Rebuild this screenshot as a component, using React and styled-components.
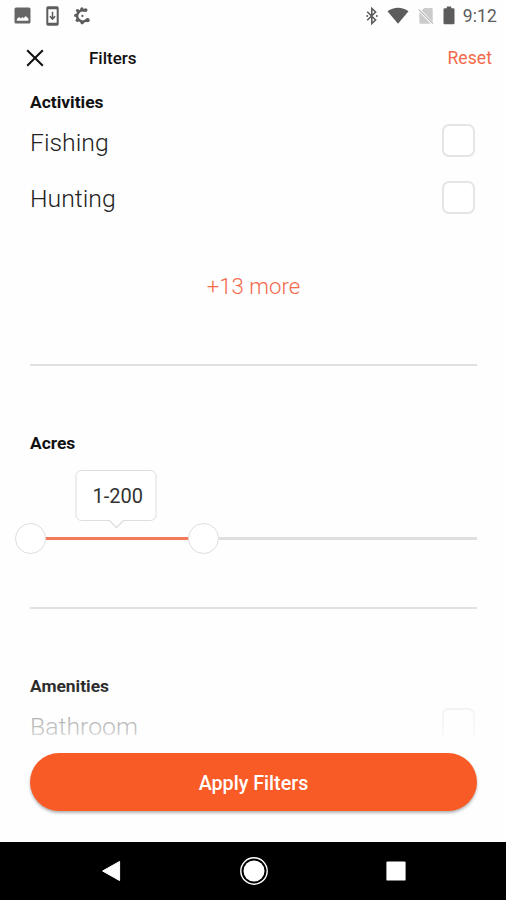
import React, { useState } from 'react';
import styled, { createGlobalStyle } from 'styled-components';

const MAX_ACRES = 518;

const App = () => {

    const [checked, setChecked] = useState({});
    const [range, setRange] = useState({ min: 1, max: 200 });

    const toggle = (name) => {
        setChecked({ ...checked, [name]: !checked[name] });
    };

    const handleReset = () => {
        setChecked({});
        setRange({ min: 1, max: 200 });
    };

    const start = ((range.min - 1) / MAX_ACRES) * 100;
    const end = (range.max / MAX_ACRES) * 100;

    return (
        <>
            <GlobalStyle />
            <Screen>
                <StatusBar>
                    <StatusLeft>
                        <ImageIcon />
                        <DownloadIcon />
                        <SyncIcon />
                    </StatusLeft>
                    <StatusRight>
                        <BluetoothIcon />
                        <WifiIcon />
                        <NoSimIcon />
                        <BatteryIcon />
                        <Clock>9:12</Clock>
                    </StatusRight>
                </StatusBar>

                <Header>
                    <CloseButton aria-label="Close">
                        <svg width="18" height="18" viewBox="0 0 18 18">
                            <path d="M1.2 1.2 16.8 16.8M16.8 1.2 1.2 16.8" stroke="#111" strokeWidth="2" />
                        </svg>
                    </CloseButton>
                    <Title>Filters</Title>
                    <ResetButton onClick={handleReset}>Reset</ResetButton>
                </Header>

                <Content>
                    <Section $height={282} $top={8}>
                        <SectionTitle>Activities</SectionTitle>
                        {['Fishing', 'Hunting'].map((name) => (
                            <OptionRow key={name}>
                                <OptionName>{name}</OptionName>
                                <Checkbox type="checkbox" aria-label={name} checked={!!checked[name]} onChange={() => toggle(name)} />
                            </OptionRow>
                        ))}
                        <MoreButton>+13 more</MoreButton>
                    </Section>

                    <Section $height={243} $top={67}>
                        <SectionTitle>Acres</SectionTitle>
                        <Slider>
                            <Track />
                            <TrackFill style={{ left: `${start}%`, width: `${end - start}%` }} />
                            <Thumb style={{ left: `${start}%` }} />
                            <Thumb style={{ left: `${end}%` }} />
                            <Tooltip style={{ left: `${(start + end) / 2}%` }}>
                                {range.min}-{range.max}
                                <TooltipArrow width="16" height="9" viewBox="0 0 16 9">
                                    <path d="M0 0h16L8 7.5z" fill="#fff" />
                                    <path d="M0 .5h1L8 7.5l7-7h1" fill="none" stroke="#dedede" strokeWidth="1.3" />
                                </TooltipArrow>
                            </Tooltip>
                        </Slider>
                    </Section>

                    <Section $height={160} $top={67}>
                        <SectionTitle>Amenities</SectionTitle>
                        <OptionRow>
                            <OptionName>Bathroom</OptionName>
                            <Checkbox type="checkbox" aria-label="Bathroom" checked={!!checked.Bathroom} onChange={() => toggle('Bathroom')} />
                        </OptionRow>
                    </Section>
                    <Fade />
                </Content>

                <Footer>
                    <ApplyButton>Apply Filters</ApplyButton>
                </Footer>

                <NavBar>
                    <svg width="20" height="22" viewBox="0 0 20 22">
                        <path d="M18.6 1.4v19.2L1.6 11z" fill="#fff" stroke="#fff" strokeWidth="1" strokeLinejoin="round" />
                    </svg>
                    <svg width="30" height="30" viewBox="0 0 30 30">
                        <circle cx="15" cy="15" r="13.2" fill="none" stroke="#fff" strokeWidth="1.4" />
                        <circle cx="15" cy="15" r="10.5" fill="#fff" />
                    </svg>
                    <svg width="20" height="20" viewBox="0 0 20 20">
                        <rect x=".4" y=".4" width="19.2" height="19.2" rx="1.2" fill="#fff" />
                    </svg>
                </NavBar>
            </Screen>
        </>
    );
};

export default App;

const ImageIcon = () => (
    <svg width="17" height="17" viewBox="0 0 17 17">
        <path fillRule="evenodd" fill="#666" d="M2 .5h13A1.5 1.5 0 0 1 16.5 2v13a1.5 1.5 0 0 1-1.5 1.5H2A1.5 1.5 0 0 1 .5 15V2A1.5 1.5 0 0 1 2 .5zM2.8 13.8h11.6V11.5l-2.8-2.5-1.8 2.2-1.2-1.1-1.6 1.5L5 10.1l-2.2 2.2z" />
    </svg>
);

const DownloadIcon = () => (
    <svg width="13" height="20" viewBox="0 0 13 20">
        <path fillRule="evenodd" fill="#5c5c5c" d="M2 .3h9A1.7 1.7 0 0 1 12.7 2v16a1.7 1.7 0 0 1-1.7 1.7H2A1.7 1.7 0 0 1 .3 18V2A1.7 1.7 0 0 1 2 .3zM2.3 3.3v13.4h8.4V3.3z" />
        <path d="M6.5 5.7v7M3.9 10.2l2.6 2.9 2.6-2.9" fill="none" stroke="#5c5c5c" strokeWidth="1.5" />
    </svg>
);

const SyncIcon = () => (
    <svg width="18" height="18" viewBox="0 0 18 18">
        <path d="M10.8 3.7A5.6 5.6 0 1 0 12.6 13" fill="none" stroke="#5c5c5c" strokeWidth="2.6" />
        <g fill="#5c5c5c">
            <circle cx="7.9" cy="1.9" r="1.7" />
            <circle cx="11.6" cy="3.1" r="1.9" />
            <circle cx="3.6" cy="3.6" r="1.7" />
            <circle cx="1.8" cy="8.4" r="1.7" />
            <circle cx="3.4" cy="13.2" r="1.8" />
            <circle cx="8.2" cy="15.6" r="1.8" />
            <circle cx="13.6" cy="13.2" r="2.1" />
            <circle cx="8.4" cy="8.9" r="1.1" />
        </g>
    </svg>
);

const BluetoothIcon = () => (
    <svg width="12" height="18" viewBox="0 0 12 18">
        <path d="M1.2 4.7 9.6 13 5.8 16.5V1.5L9.6 5 1.2 13.3" fill="none" stroke="#5c5c5c" strokeWidth="1.6" />
        <circle cx="1.2" cy="9" r="1" fill="#5c5c5c" />
        <circle cx="10.8" cy="9" r="1" fill="#5c5c5c" />
    </svg>
);

const WifiIcon = () => (
    <svg width="22" height="17" viewBox="0 0 22 17">
        <path d="M.5 4.3C6.5-.6 15.500-.6 21.5 4.3L11 16.8z" fill="#5c5c5c" />
    </svg>
);

const NoSimIcon = () => (
    <svg width="16" height="18" viewBox="0 0 16 18">
        <path d="M6.3 1h7.2a1.2 1.2 0 0 1 1.2 1.2V15L3.8 3.5zM1.3 5.2l11.4 11.6H2.5a1.2 1.2 0 0 1-1.2-1.2z" fill="#cbcbcb" />
        <path d="M.8 2.600 14.900 16.700" stroke="#b5b5b5" strokeWidth="1.2" />
    </svg>
);

const BatteryIcon = () => (
    <svg width="12" height="19" viewBox="0 0 12 19">
        <path d="M3.8.4h4.4v1.9h2.1a1.2 1.2 0 0 1 1.2 1.2v13.6a1.2 1.2 0 0 1-1.2 1.2H1.7a1.2 1.2 0 0 1-1.2-1.2V3.5a1.2 1.2 0 0 1 1.2-1.2h2.1z" fill="#5c5c5c" />
    </svg>
);

const GlobalStyle = createGlobalStyle`
  * {
    box-sizing: border-box;
  }
  body {
    margin: 0;
    background-color: #fefefe;
    font-family: Roboto, 'Liberation Sans', sans-serif;
  }
  button {
    padding: 0;
    border: none;
    background: none;
    font-family: inherit;
    cursor: pointer;
  }
  svg {
    display: block;
    flex-shrink: 0;
  }
`;

const Screen = styled.div`
  display: flex;
  flex-direction: column;
  width: 506px;
  height: 900px;
  overflow: hidden;
`;

const StatusBar = styled.div`
  display: flex;
  justify-content: space-between;
  align-items: center;
  height: 31px;
  padding: 0 9px 0 14px;
`;

const StatusLeft = styled.div`
  display: flex;
  align-items: center;
  gap: 15px;
`;

const StatusRight = styled.div`
  display: flex;
  align-items: center;
  gap: 9px;
`;

const Clock = styled.span`
  margin-left: -1px;
  color: #5c5c5c;
  font-size: 17.5px;
  letter-spacing: 0.1px;
`;

const Header = styled.div`
  display: flex;
  align-items: center;
  height: 53px;
  padding: 0 14px 0 26px;
`;

const CloseButton = styled.button`
  margin-right: 45px;
`;

const Title = styled.h1`
  flex: 1;
  margin: 0;
  color: #111;
  font-size: 17px;
  font-weight: 500;
`;

const ResetButton = styled.button`
  color: #f4694a;
  font-size: 17.5px;
  letter-spacing: 0.1px;
`;

const Content = styled.div`
  position: relative;
  height: 661px;
  padding: 0 29px 0 30px;
  overflow: hidden;
`;

const Section = styled.section`
  height: ${(props) => props.$height}px;
  padding-top: ${(props) => props.$top}px;
  border-bottom: 2px solid #e1e1e1;
`;

const SectionTitle = styled.h2`
  margin: 0;
  height: 21px;
  line-height: 21px;
  color: #111;
  font-size: 17.4px;
  font-weight: 700;
`;

const OptionRow = styled.label`
  display: flex;
  justify-content: space-between;
  align-items: center;
  height: 56.5px;
  padding-right: 2px;
`;

const OptionName = styled.span`
  padding-top: 2px;
  color: #222;
  font-size: 24.8px;
  font-weight: 300;
`;

const Checkbox = styled.input`
  appearance: none;
  width: 33px;
  height: 33px;
  margin: 0 0 1px;
  border: 2px solid #e5e5e5;
  border-radius: 7px;
  background-color: ${(props) => (props.checked ? '#f95b27' : '#fff')};
`;

const MoreButton = styled.button`
  display: block;
  margin: 46.5px auto 0;
  color: #f4694a;
  font-size: 22.2px;
  font-weight: 300;
`;

const Slider = styled.div`
  position: relative;
  height: 30px;
  margin-top: 69px;
`;

const Track = styled.div`
  position: absolute;
  top: 14px;
  width: 100%;
  height: 3px;
  background-color: #dfdfdf;
`;

const TrackFill = styled(Track)`
  background-color: #f47a5c;
`;

const Thumb = styled.div`
  position: absolute;
  top: 0;
  width: 31px;
  height: 31px;
  margin-left: -15px;
  border: 1.5px solid #dedede;
  border-radius: 50%;
  background-color: #fff;
`;

const Tooltip = styled.div`
  position: absolute;
  bottom: 32px;
  display: flex;
  justify-content: center;
  align-items: center;
  width: 81px;
  height: 51px;
  padding-left: 3px;
  border: 1.5px solid #dedede;
  border-radius: 6px;
  background-color: #fff;
  color: #333;
  font-size: 20px;
  transform: translateX(-50%);
`;

const TooltipArrow = styled.svg`
  position: absolute;
  top: 100%;
  left: 50%;
  margin-left: -8px;
`;

const Fade = styled.div`
  position: absolute;
  left: 0;
  right: 0;
  bottom: 0;
  height: 80px;
  background: linear-gradient(
    rgba(254, 254, 254, 0),
    rgba(254, 254, 254, 0.12) 30%,
    rgba(254, 254, 254, 0.62) 60%,
    rgba(254, 254, 254, 0.75) 84%,
    #fefefe 94%
  );
  pointer-events: none;
`;

const Footer = styled.div`
  height: 97px;
  padding: 8px 29px 0 30px;
`;

const ApplyButton = styled.button`
  width: 100%;
  height: 58px;
  padding-top: 2px;
  border-radius: 29px;
  background-color: #f95b27;
  box-shadow: 0 2px 3px rgba(0, 0, 0, 0.3);
  color: #fff;
  font-size: 19.7px;
  font-weight: 500;
`;

const NavBar = styled.div`
  display: flex;
  justify-content: space-between;
  align-items: center;
  height: 58px;
  padding: 0 100px 0 101px;
  background-color: #000;
`;
